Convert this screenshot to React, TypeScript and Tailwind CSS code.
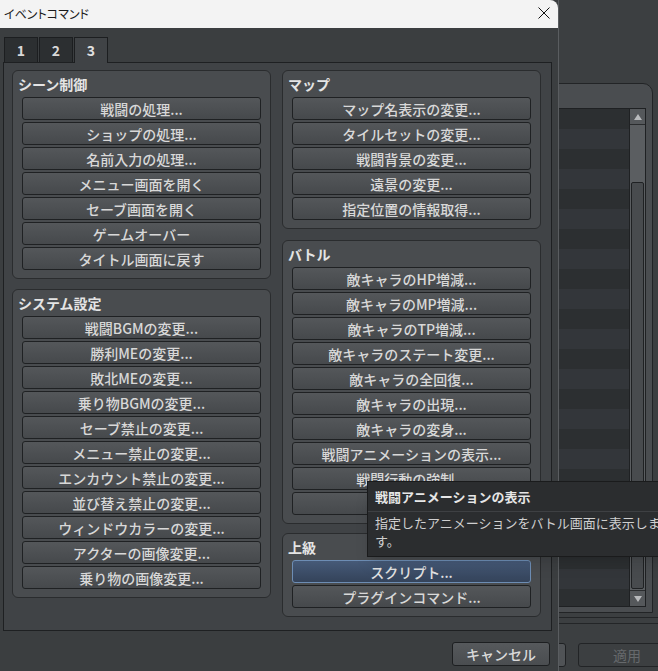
import React from 'react'

const scene = ['戦闘の処理...', 'ショップの処理...', '名前入力の処理...', 'メニュー画面を開く', 'セーブ画面を開く', 'ゲームオーバー', 'タイトル画面に戻す']
const system = ['戦闘BGMの変更...', '勝利MEの変更...', '敗北MEの変更...', '乗り物BGMの変更...', 'セーブ禁止の変更...', 'メニュー禁止の変更...', 'エンカウント禁止の変更...', '並び替え禁止の変更...', 'ウィンドウカラーの変更...', 'アクターの画像変更...', '乗り物の画像変更...']
const map = ['マップ名表示の変更...', 'タイルセットの変更...', '戦闘背景の変更...', '遠景の変更...', '指定位置の情報取得...']
const battle = ['敵キャラのHP増減...', '敵キャラのMP増減...', '敵キャラのTP増減...', '敵キャラのステート変更...', '敵キャラの全回復...', '敵キャラの出現...', '敵キャラの変身...', '戦闘アニメーションの表示...', '戦闘行動の強制...', 'バトルの中断']
const advanced = ['スクリプト...', 'プラグインコマンド...']

function CmdButton({ label, focused }: { label: string; focused?: boolean }) {
  return (
    <button
      className={
        focused
          ? 'flex h-[23px] w-full items-center justify-center rounded-[3px] border border-[#6d8db4] bg-linear-to-b from-[#465a78] to-[#34435a] text-[14px] leading-none font-medium text-[#e2e2e2]'
          : 'flex h-[23px] w-full items-center justify-center rounded-[3px] border border-[#1f2123] bg-linear-to-b from-[#54575a] to-[#46494c] text-[14px] leading-none font-medium text-[#d8d8d8]'
      }
    >
      {label}
    </button>
  )
}

function Group({ title, items, focusedIndex, className }: { title: string; items: string[]; focusedIndex?: number; className?: string }) {
  return (
    <div className={'flex w-[259px] flex-col rounded-[6px] border border-[#2a2c2e] bg-[#494c4f] pb-[8px] ' + (className || '')}>
      <div className="flex h-[26px] items-center pl-[5px] text-[14px] font-bold text-[#e4e4e4]">{title}</div>
      <div className="flex flex-col gap-[2px] px-[9px]">
        {items.map((item, i) => (
          <CmdButton key={item} label={item} focused={i === focusedIndex} />
        ))}
      </div>
    </div>
  )
}

function BackgroundWindow() {
  const rows = Array.from({ length: 26 })
  return (
    <div className="flex h-full w-full flex-col bg-[#3c3f41]">
      <div className="h-[83px]" />
      {/* list panel */}
      <div className="mr-[5px] flex h-[530px] flex-col rounded-tr-[10px] border border-[#222426] bg-[#4a4d50] pt-[24px]">
        <div className="flex h-[499px]">
          <div className="flex flex-1 flex-col overflow-hidden border border-[#1f2123] bg-[#2e3133]">
            {rows.map((_, i) => (
              <div key={i} className={i % 2 === 0 ? 'h-[20px] shrink-0 bg-[#2c2f31]' : 'h-[20px] shrink-0 bg-[#33363a]'} />
            ))}
          </div>
          <div className="flex w-[16px] flex-col border border-l-0 border-[#1f2123] bg-[#5b5e61]">
            <div className="flex h-[16px] items-center justify-center border-b border-[#2a2c2e] bg-[#55585b]">
              <svg width="8" height="6" viewBox="0 0 8 6"><path d="M4 0 L8 6 L0 6 Z" fill="#b8babc" /></svg>
            </div>
            <div className="flex-1 px-[1px] pt-[57px] pb-[1px]">
              <div className="h-full rounded-[2px] border border-[#1f2123] bg-[#484b4e]" />
            </div>
            <div className="flex h-[16px] items-center justify-center border-t border-[#2a2c2e] bg-[#55585b]">
              <svg width="8" height="6" viewBox="0 0 8 6"><path d="M0 0 L8 0 L4 6 Z" fill="#b8babc" /></svg>
            </div>
          </div>
          <div className="w-[6px]" />
        </div>
      </div>
      <div className="mt-[4px] h-px bg-[#232527]" />
      <div className="mt-[5px] h-px bg-[#232527]" />
      <div className="mt-[19px] flex gap-[12px] pl-[468px]">
        <div className="h-[24px] w-[98px] shrink-0 rounded-[3px] border border-[#1f2123] bg-[#505356]" />
        <div className="flex h-[24px] w-[98px] shrink-0 items-center justify-center rounded-[3px] border border-[#222426] bg-[#3c3f41] text-[14px] text-[#66696c]">
          適用
        </div>
      </div>
    </div>
  )
}

export default function App() {
  return (
    <div
      className="relative h-[671px] w-[658px] overflow-hidden"
      style={{ fontFamily: '"Noto Sans CJK JP", "Noto Sans", sans-serif' }}
    >
      <BackgroundWindow />

      {/* Dialog window */}
      <div className="absolute top-0 left-0 flex h-[671px] w-[559px] flex-col border-r border-[#5a5d60] bg-[#3b3e40]">
        <div className="flex h-[28px] shrink-0 items-center justify-between rounded-tr-[8px] bg-[#f3f3f3] pr-[8px] pl-[4px]">
          <span className="text-[12px] text-[#1a1a1a] [font-feature-settings:'palt']">イベントコマンド</span>
          <svg width="12" height="12" viewBox="0 0 12 12" className="mb-[2px]">
            <path d="M0.5 0.5 L11.5 11.5 M11.5 0.5 L0.5 11.5" stroke="#111" strokeWidth="1" />
          </svg>
        </div>

        {/* Tabs */}
        <div className="mt-[9px] flex h-[25px] items-end pl-[4px]">
          <div className="flex h-[25px] w-[34px] items-center justify-center border border-b-0 border-[#1c1e20] bg-[#2c2f31] text-[14px] font-bold text-[#d8d8d8]">1</div>
          <div className="ml-[1px] flex h-[25px] w-[34px] items-center justify-center border border-b-0 border-[#1c1e20] bg-[#2c2f31] text-[14px] font-bold text-[#d8d8d8]">2</div>
          <div className="relative z-10 ml-[1px] -mb-px flex h-[26px] w-[34px] items-center justify-center border border-b-0 border-[#1c1e20] bg-[#404346] pb-px text-[14px] font-bold text-[#e0e0e0]">3</div>
        </div>

        {/* Tab panel */}
        <div className="ml-[3px] flex h-[569px] w-[549px] shrink-0 gap-[11px] border border-[#1e2022] bg-[#404346] pt-[7px] pl-[8px]">
          <div className="flex flex-col">
            <Group title="シーン制御" items={scene} />
            <Group title="システム設定" items={system} className="mt-[10px]" />
          </div>
          <div className="flex flex-col">
            <Group title="マップ" items={map} />
            <Group title="バトル" items={battle} className="mt-[11px]" />
            <Group title="上級" items={advanced} focusedIndex={0} className="mt-[9px]" />
          </div>
        </div>

        <div className="mt-[11px] flex justify-end pr-[8px]">
          <button className="flex h-[24px] w-[98px] items-center justify-center rounded-[3px] border border-[#1d1f21] bg-linear-to-b from-[#56595c] to-[#4a4d50] text-[14px] font-medium text-[#dadada]">
            キャンセル
          </button>
        </div>
      </div>

      {/* Tooltip */}
      <div className="absolute top-[481px] left-[367px] w-[308px] border border-[#1a1b1c] bg-[#2b2d2f] shadow-lg">
        <div className="flex h-[30px] items-center border-b border-[#3e4043] px-[7px] text-[13px] font-bold text-[#e6e6e6]">
          戦闘アニメーションの表示
        </div>
        <div className="px-[7px] pt-[2px] pb-[6px] text-[13px] leading-[18px] text-[#cfcfcf]">
          指定したアニメーションをバトル画面に表示します。
        </div>
      </div>
    </div>
  )
}
